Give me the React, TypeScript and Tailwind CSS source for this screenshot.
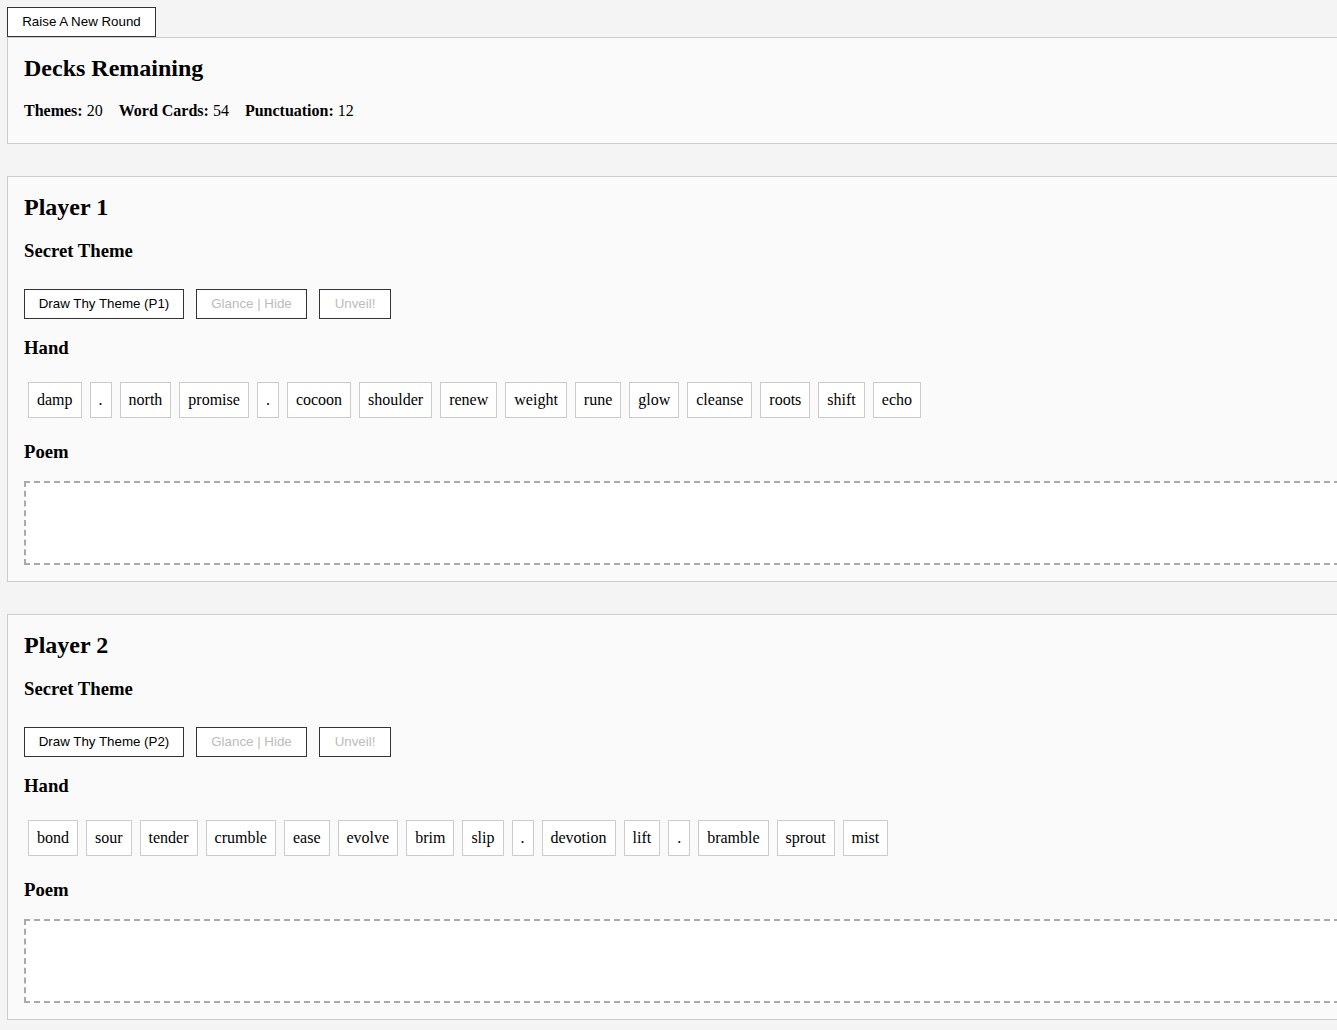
const hands: Record<number, string[]> = {
  1: ["damp", ".", "north", "promise", ".", "cocoon", "shoulder", "renew", "weight", "rune", "glow", "cleanse", "roots", "shift", "echo"],
  2: ["bond", "sour", "tender", "crumble", "ease", "evolve", "brim", "slip", ".", "devotion", "lift", ".", "bramble", "sprout", "mist"],
};

function PlayerPanel({ n }: { n: number }) {
  return (
    <section className="mt-[32px] w-[1400px] border border-[#ccc] bg-[#fafafa] px-[16px] pt-[16px] pb-[16px]">
      <h2 className="text-[24px] leading-[28px] font-bold">Player {n}</h2>
      <h3 className="mt-[19px] text-[18.72px] leading-[22px] font-bold">Secret Theme</h3>
      <div className="mt-[27px] flex gap-[12px] font-['Liberation_Sans',Arial,sans-serif] text-[13.33px]">
        <button className="h-[30px] w-[160px] border border-[#333] bg-white text-black">
          Draw Thy Theme (P{n})
        </button>
        <button disabled className="h-[30px] w-[111px] border border-[#333] bg-white text-[#bbb]">
          Glance | Hide
        </button>
        <button disabled className="h-[30px] w-[72px] border border-[#333] bg-white text-[#bbb]">
          Unveil!
        </button>
      </div>
      <h3 className="mt-[18px] text-[18.72px] leading-[22px] font-bold">Hand</h3>
      <div className="mt-[19px] flex gap-[8px] px-[4px] py-[4px] -my-[4px]">
        {hands[n].map((w, i) => (
          <span
            key={i}
            className="border border-[#ccc] bg-white px-[8px] py-[8px] text-[16px] leading-[18px]"
          >
            {w}
          </span>
        ))}
      </div>
      <h3 className="mt-[23px] text-[18.72px] leading-[22px] font-bold">Poem</h3>
      <div className="mt-[18px] h-[84px] border-2 border-dashed border-[#aaa] bg-white"></div>
    </section>
  );
}

export default function App() {
  return (
    <div className="h-screen overflow-hidden bg-[#f4f4f4] p-[7px] font-['Liberation_Serif','Times_New_Roman',serif] text-black">
      <button className="block h-[30px] w-[149px] border border-[#333] bg-white font-['Liberation_Sans',Arial,sans-serif] text-[13.33px] text-black">
        Raise A New Round
      </button>
      <section className="w-[1400px] border border-[#ccc] bg-[#fafafa] px-[16px] pt-[16px] pb-[23px]">
        <h2 className="text-[24px] leading-[28px] font-bold">Decks Remaining</h2>
        <p className="mt-[20px] text-[16px] leading-[18px]">
          <span className="mr-[16px]">
            <b>Themes:</b> 20
          </span>
          <span className="mr-[16px]">
            <b>Word Cards:</b> 54
          </span>
          <span>
            <b>Punctuation:</b> 12
          </span>
        </p>
      </section>
      <PlayerPanel n={1} />
      <PlayerPanel n={2} />
    </div>
  );
}
